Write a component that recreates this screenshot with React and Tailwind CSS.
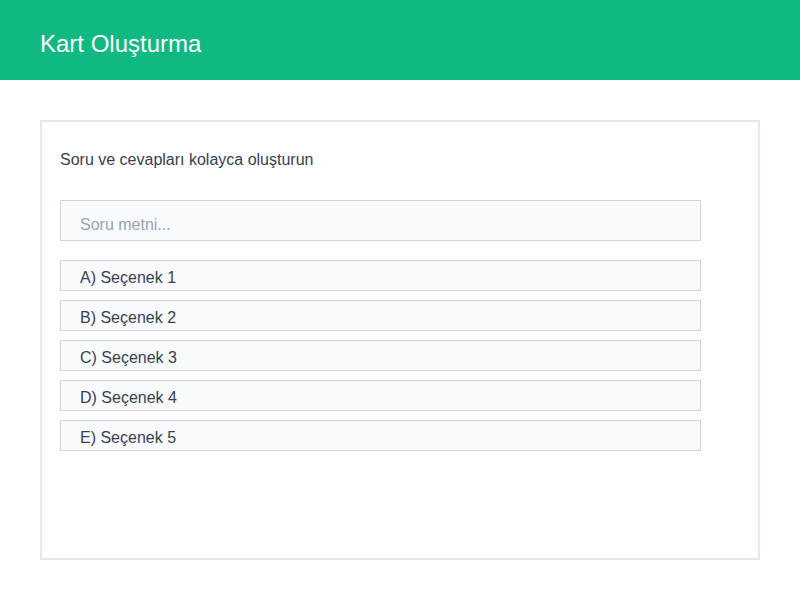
export default function App() {
  const opts = ["A) Seçenek 1", "B) Seçenek 2", "C) Seçenek 3", "D) Seçenek 4", "E) Seçenek 5"];
  return (
    <div className="min-h-[600px] bg-white" style={{ fontFamily: '"Liberation Sans", Arial, sans-serif' }}>
      <header className="h-[80px] bg-[#10b981] flex items-center px-[40px] pt-[8px]">
        <h1 className="text-white text-[24px] leading-none">Kart Oluşturma</h1>
      </header>
      <main className="px-[40px] pt-[40px]">
        <div className="h-[440px] border-2 border-[#e5e7eb] px-[18px] pt-[28px]">
          <p className="text-[16px] text-[#374151] leading-[20px]">Soru ve cevapları kolayca oluşturun</p>
          <div className="mt-[30px] w-[641px] h-[41px] border border-[#d1d5db] bg-[#f9fafb] flex items-center px-[19px] pt-[8px]">
            <span className="text-[16px] text-[#9ca3af]">Soru metni...</span>
          </div>
          <div className="mt-[19px] flex flex-col gap-[9px]">
            {opts.map((o) => (
              <div key={o} className="w-[641px] h-[31px] border border-[#d1d5db] bg-[#f9fafb] flex items-center px-[19px] pt-[5px]">
                <span className="text-[16px] text-[#374151]">{o}</span>
              </div>
            ))}
          </div>
        </div>
      </main>
    </div>
  );
}
